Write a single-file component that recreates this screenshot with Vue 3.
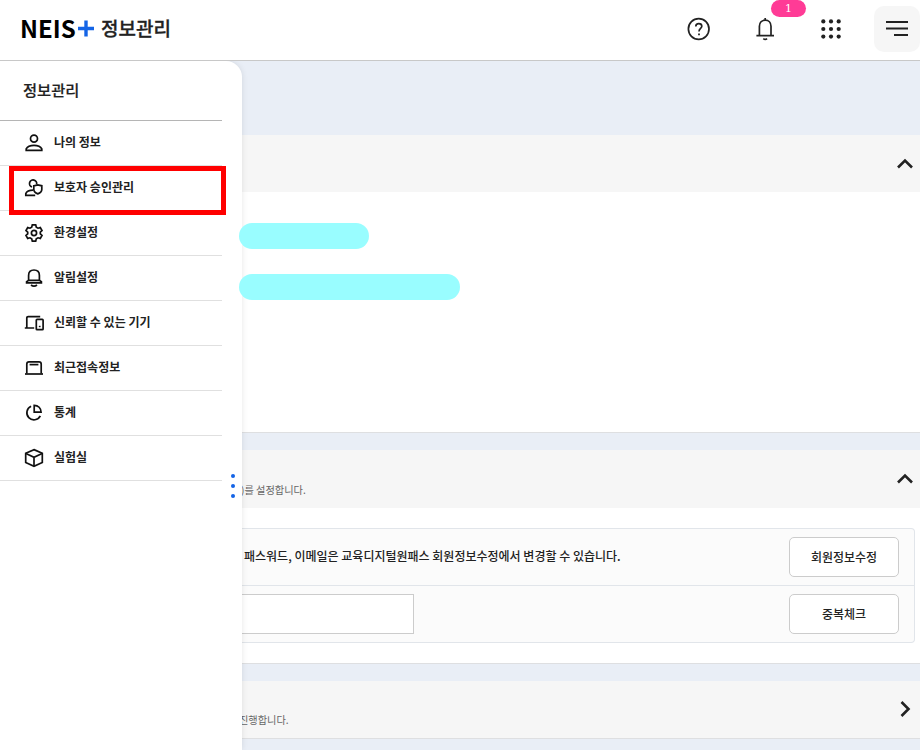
<template>
  <div class="page">
    <header class="topbar">
      <div class="brand">
        <span class="logo">NEIS</span>
        <svg class="plus" width="16" height="17" viewBox="0 0 16 17"><path d="M8 0.5V16.5M0 8.5H16" /></svg>
        <span class="brand-title">정보관리</span>
      </div>
      <div class="tools">
        <button class="tool" aria-label="도움말">
          <svg class="icon" width="24" height="24" viewBox="0 0 24 24">
            <circle cx="11.7" cy="12" r="10.3" />
            <path d="M8.8 9.4C8.8 7.6 10 6.6 11.8 6.6S14.8 7.7 14.8 9.2C14.8 11.3 12 11.5 12 14.4" />
            <path d="M11.1 17.4h1.8" />
          </svg>
        </button>
        <button class="tool" aria-label="알림">
          <svg class="icon" width="24" height="24" viewBox="0 0 24 24">
            <path d="M6.4 18.5V9.2C6.4 5.8 8.8 3.2 12.2 3.2S18 5.8 18 9.2V18.5M3.4 18.6H21M12.2 1.1V3.2M10.3 21.6Q12.2 23 14.1 21.6" />
          </svg>
          <span class="badge">1</span>
        </button>
        <button class="tool" aria-label="전체 앱">
          <svg width="24" height="24" viewBox="0 0 24 24" fill="#222">
            <template v-for="y in [4.4, 12, 19.6]" :key="y">
              <circle v-for="x in [4.3, 12, 19.7]" :key="x" :cx="x" :cy="y" r="2.1" />
            </template>
          </svg>
        </button>
        <button class="tool tool-menu" aria-label="메뉴">
          <svg class="icon menu-icon" width="22" height="16" viewBox="0 0 22 16"><path d="M0 1H22M0 7.5H22M8 14H22" /></svg>
        </button>
      </div>
    </header>

    <div class="body">
      <aside class="drawer">
        <h2>정보관리</h2>
        <ul class="menu">
          <li v-for="item in menu" :key="item.label" :class="{ marked: item.label === selected }" @click="selected = item.label">
            <svg class="icon" width="20" height="20" viewBox="0 0 20 20">
              <path v-for="d in item.paths" :key="d" :d="d" />
            </svg>
            <span>{{ item.label }}</span>
          </li>
        </ul>
        <div class="grip"><i></i><i></i><i></i></div>
      </aside>

      <main class="content">
        <section class="panel profile">
          <div class="panel-head" @click="profileOpen = !profileOpen">
            <svg class="chevron" width="18" height="12" viewBox="0 0 18 12"><path d="M2 9.5L9 2.5L16 9.5" /></svg>
          </div>
          <div v-show="profileOpen" class="panel-body">
            <div class="mask short"></div>
            <div class="mask long"></div>
          </div>
        </section>

        <section class="panel account">
          <div class="panel-head" @click="accountOpen = !accountOpen">
            <p class="desc">)를 설정합니다.</p>
            <svg class="chevron" width="18" height="12" viewBox="0 0 18 12"><path d="M2 9.5L9 2.5L16 9.5" /></svg>
          </div>
          <div v-show="accountOpen" class="panel-body">
            <div class="table">
              <div class="row">
                <p>패스워드, 이메일은 교육디지털원패스 회원정보수정에서 변경할 수 있습니다.</p>
                <button class="btn">회원정보수정</button>
              </div>
              <div class="row">
                <input v-model="userId" type="text" />
                <button class="btn">중복체크</button>
              </div>
            </div>
          </div>
        </section>

        <section class="panel leave">
          <div class="panel-head">
            <p class="desc">진행합니다.</p>
            <svg class="chevron" width="12" height="18" viewBox="0 0 12 18"><path d="M2.5 2L9.5 9L2.5 16" /></svg>
          </div>
        </section>
      </main>
    </div>
  </div>
</template>

<script setup>
import { ref } from 'vue'

const selected    = ref('보호자 승인관리')
const profileOpen = ref(true)
const accountOpen = ref(true)
const userId      = ref('')

const menu = [
  { label: '나의 정보', paths: [
    'M10 2.2a3.5 3.5 0 1 1 0 7a3.5 3.5 0 1 1 0-7z',
    'M2.2 17.3V15.8C3.6 13.2 6.6 12.4 10 12.4S16.4 13.2 17.8 15.8V17.3Z',
  ] },
  { label: '보호자 승인관리', paths: [
    'M8 9A3.6 3.6 0 1 1 12.6 6.4',
    'M11.2 17.3H1.8V15.6C2.8 13.2 5 12.2 9 12.2',
    'M9.8 7.8L13.8 6.9L17.8 7.8V11.6C17.8 13.8 16.2 15 13.8 15.9C11.4 15 9.8 13.8 9.8 11.6Z',
  ] },
  { label: '환경설정', paths: [
    'M8.3 1.9H11.7L12.3 4.2L14 5.2L16.3 4.6L18 7.5L16.3 9.1V10.9L18 12.5L16.3 15.4L14 14.8L12.3 15.8L11.7 18.1H8.3L7.7 15.8L6 14.8L3.7 15.4L2 12.5L3.7 10.9V9.1L2 7.5L3.7 4.6L6 5.2L7.7 4.2Z',
    'M10 7.4a2.6 2.6 0 1 1 0 5.2a2.6 2.6 0 1 1 0-5.2z',
  ] },
  { label: '알림설정', paths: [
    'M4.6 12.6V7.4C4.6 4 6.8 2 10 2S15.4 4 15.4 7.4V12.6',
    'M4.6 12.4L2.6 13.8V14.8H17.4V13.8L15.4 12.4Z',
    'M7 17Q10 19.4 13 17',
  ] },
  { label: '신뢰할 수 있는 기기', paths: [
    'M16.2 3.6H4.2Q2.8 3.6 2.8 5V14.8M0.8 15H10.2',
    'M13.1 6.4H18.3Q19.1 6.4 19.1 7.2V15.9Q19.1 16.7 18.3 16.7H13.1Q12.3 16.7 12.3 15.9V7.2Q12.3 6.4 13.1 6.4Z',
    'M15.7 12.8V14.2',
  ] },
  { label: '최근접속정보', paths: [
    'M2.8 15.5V6.2Q2.8 3.9 5 3.9H15Q17.2 3.9 17.2 6.2V15.5',
    'M1 16H19',
    'M5.6 6.6H14.4',
  ] },
  { label: '통계', paths: [
    'M7.1 3.2A7.1 7.1 0 1 0 16.3 12.9',
    'M10.2 2.3C14.2 2.3 17.1 5.2 17.1 9.2H10.2Z',
  ] },
  { label: '실험실', paths: [
    'M10 1.6L18.3 5.3V14.4L10 18.3L1.7 14.4V5.3Z',
    'M1.9 5.5L10 9.3L18.1 5.5M10 9.3V18',
  ] },
]
</script>

<style>
body { margin: 0; overflow: hidden; }
</style>

<style scoped>
.page { height: 100vh; display: flex; flex-direction: column; overflow: hidden; font-family: "Noto Sans CJK KR", sans-serif; font-size: 12px; color: #222; background: #e9eef6; }
.page *, .marked::after { box-sizing: border-box; }
h2, p, ul { margin: 0; padding: 0; }
button { font-family: inherit; cursor: pointer; }
.icon { fill: none; stroke: #222; stroke-width: 1.7; flex: none; }

.topbar { flex: none; height: 61px; display: flex; justify-content: space-between; background: #fff; border-bottom: 1px solid #c8c8c8; }
.brand { display: flex; align-items: center; height: 56px; padding-left: 20px; }
.logo { font-size: 24px; font-weight: 700; line-height: 1; color: #000; width: 58px; white-space: nowrap; }
.plus { stroke: #1464e6; stroke-width: 3.4; margin-right: 7px; }
.brand-title { padding-bottom: 2px; font-size: 19px; font-weight: 500; line-height: 1; -webkit-text-stroke: 0.3px #222; }
.tools { display: flex; align-items: center; height: 58px; }
.tool { position: relative; display: flex; align-items: center; justify-content: center; width: 24px; height: 24px; margin-right: 42px; padding: 0; border: none; background: none; }
.tool:nth-child(3) { margin-right: 31px; }
.tool-menu { width: 46px; height: 46px; margin-right: 0; border-radius: 10px; background: #f6f6f6; }
.menu-icon { stroke-width: 2; }
.badge { position: absolute; left: 18px; top: -17px; width: 35px; height: 17px; border-radius: 9px; background: #ff3b96; color: #fff; font: 11px/17px "DejaVu Serif", serif; text-align: center; }

.body { flex: 1; display: flex; min-height: 0; }
.drawer { position: relative; z-index: 1; flex: none; width: 242px; background: #fff; border-top-right-radius: 16px; box-shadow: 0 0 6px rgba(0, 0, 0, 0.1); clip-path: inset(0 -10px 0 0); }
.drawer h2 { width: 222px; height: 60px; padding-left: 23px; border-bottom: 1px solid #b5b5b5; font-size: 15.3px; font-weight: 500; line-height: 56px; -webkit-text-stroke: 0.2px #222; }
.menu { width: 222px; list-style: none; }
.menu li { position: relative; display: flex; align-items: center; gap: 10px; height: 45px; padding-left: 24px; border-bottom: 1px solid #e0e0e0; font-weight: 700; cursor: pointer; }
.menu li .icon { stroke: #111; }
.menu li span { line-height: 18px; padding-bottom: 2px; }
.marked::after { content: ''; position: absolute; left: 9px; top: 0; width: 217px; height: 49px; border: 5px solid #f00; }
.grip { position: absolute; left: 231px; top: 413px; display: flex; flex-direction: column; gap: 6px; }
.grip i { width: 4px; height: 4px; border-radius: 50%; background: #1464e6; }

.content { flex: 1; min-width: 0; padding-top: 74px; }
.panel { background: #fff; border-bottom: 1px solid #dedfe1; }
.panel-head { display: flex; align-items: center; height: 58px; padding-right: 6px; background: #f6f6f6; cursor: pointer; }
.chevron { margin-left: auto; fill: none; stroke: #222; stroke-width: 2.6; }
.desc { margin-left: -1px; padding-top: 21px; font-size: 10.2px; line-height: 16px; color: #666; white-space: nowrap; }
.profile { height: 298px; margin-bottom: 17px; }
.profile .panel-head { height: 57px; }
.profile .panel-body { padding-top: 31px; }
.mask { position: relative; z-index: 2; height: 26px; margin: 0 0 25px -3.5px; border-radius: 13px; background: #99fdff; }
.short { width: 130px; }
.long { width: 221px; }
.account { height: 214px; margin-bottom: 17px; }
.account .panel-body { padding: 20px 5px 0 0; }
.table { border: 1px solid #e1e5ea; border-left: none; border-radius: 0 4px 4px 0; background: #fbfbfb; }
.row { display: flex; align-items: center; justify-content: space-between; height: 57px; padding: 0 15px 0 0; }
.row + .row { height: 57px; border-top: 1px solid #e1e5ea; }
.row:first-child { height: 56px; }
.row p { padding: 0 0 2px 2px; font-weight: 500; line-height: 18px; white-space: nowrap; }
.row input { width: 172px; height: 40px; border: 1px solid #ccc; border-left: none; background: #fff; outline: none; }
.btn { width: 110px; height: 40px; padding: 0 0 2px; border: 1px solid #ccc; border-radius: 5px; background: #fff; color: #222; font-size: 12px; font-weight: 500; }
.leave .panel-head { height: 57px; padding-right: 9px; }
.leave .desc { margin-left: -3px; }
.leave .chevron { margin-bottom: 2px; }
</style>
